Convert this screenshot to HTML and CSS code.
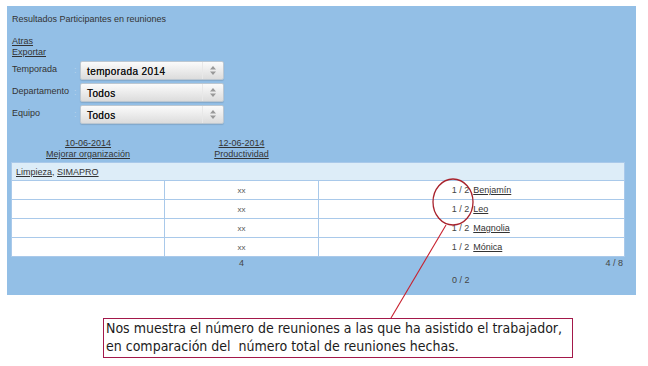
FILE: index.html
```html
<!DOCTYPE html>
<html lang="es">
<head>
    <meta charset="UTF-8">
    <title>Resultados Participantes en reuniones</title>
    <link rel="stylesheet" href="styles.css">
</head>
<body>
    <div class="panel">
        <div class="title">Resultados Participantes en reuniones</div>

        <div class="links">
            <a href="#">Atras</a><br>
            <a href="#">Exportar</a>
        </div>

        <div class="filters">
            <div class="filter">
                <span class="label">Temporada</span><span class="colon">:</span>
                <div class="select">
                    <span class="value">temporada 2014</span>
                    <span class="arrow"><svg width="6" height="9" viewBox="0 0 6 9"><path d="M3 0 L6 3.5 L0 3.5 Z M0 5.5 L6 5.5 L3 9 Z" fill="#999"/></svg></span>
                </div>
            </div>
            <div class="filter">
                <span class="label">Departamento</span><span class="colon">:</span>
                <div class="select">
                    <span class="value">Todos</span>
                    <span class="arrow"><svg width="6" height="9" viewBox="0 0 6 9"><path d="M3 0 L6 3.5 L0 3.5 Z M0 5.5 L6 5.5 L3 9 Z" fill="#999"/></svg></span>
                </div>
            </div>
            <div class="filter">
                <span class="label">Equipo</span><span class="colon">:</span>
                <div class="select">
                    <span class="value">Todos</span>
                    <span class="arrow"><svg width="6" height="9" viewBox="0 0 6 9"><path d="M3 0 L6 3.5 L0 3.5 Z M0 5.5 L6 5.5 L3 9 Z" fill="#999"/></svg></span>
                </div>
            </div>
        </div>

        <table class="dates">
            <tr>
                <td><a href="#">10-06-2014</a><br><a href="#">Mejorar organización</a></td>
                <td><a href="#">12-06-2014</a><br><a href="#">Productividad</a></td>
                <td></td>
                <td></td>
            </tr>
        </table>

        <table class="results">
            <tr class="group">
                <td colspan="4"><a href="#">Limpieza</a>, <a href="#">SIMAPRO</a></td>
            </tr>
            <tr><td></td><td class="mid">xx</td><td class="count">1 / 2</td><td class="name"><a href="#">Benjamín</a></td></tr>
            <tr><td></td><td class="mid">xx</td><td class="count">1 / 2</td><td class="name"><a href="#">Leo</a></td></tr>
            <tr><td></td><td class="mid">xx</td><td class="count">1 / 2</td><td class="name"><a href="#">Magnolia</a></td></tr>
            <tr><td></td><td class="mid">xx</td><td class="count">1 / 2</td><td class="name"><a href="#">Mónica</a></td></tr>
        </table>

        <table class="totals">
            <tr><td></td><td class="mid">4</td><td></td><td class="count">4 / 8</td></tr>
            <tr class="second"><td></td><td></td><td class="count">0 / 2</td><td></td></tr>
        </table>
    </div>

    <div class="note">
        Nos muestra el número de reuniones a las que ha asistido el trabajador,<br>
        en comparación del &nbsp;número total de reuniones hechas.
    </div>

    <svg class="mark" width="648" height="366" viewBox="0 0 648 366">
        <ellipse cx="453" cy="202" rx="20" ry="23" fill="none" stroke="#a8222c" stroke-width="1.3"/>
        <line x1="446" y1="225" x2="391" y2="318" stroke="#c8202e" stroke-width="1.1"/>
    </svg>
</body>
</html>
```

FILE: styles.css
```css
body {
    margin: 0;
    background-color: #fff;
    font-family: "Liberation Sans", Arial, sans-serif;
    font-size: 9px;
    color: #333;
    position: relative;
    width: 648px;
    height: 366px;
    overflow: hidden;
}

a {
    color: #333;
    text-decoration: underline;
}

.panel {
    margin: 6px 0 0 7px;
    width: 614px;
    height: 289px;
    padding: 0 11px 0 4px;
    background-color: #93bfe6;
    overflow: hidden;
}

.title {
    padding: 7px 0 0 1px;
    line-height: 12px;
}

.links {
    margin-top: 11px;
    padding-left: 1px;
    line-height: 11px;
}

.filters {
    margin-top: 3px;
    display: flex;
    flex-direction: column;
    gap: 4px;
}

.filter {
    display: flex;
    align-items: center;
    height: 18px;
}

.filter .label {
    width: 62px;
    padding-left: 1px;
    margin-top: -2px;
}

.filter .colon {
    width: 6px;
    color: #b8d3ec;
}

.select {
    display: flex;
    width: 142px;
    height: 17px;
    border: 1px solid #bcc7d1;
    border-radius: 2px;
    background: linear-gradient(#fbfbfb, #dcdcdc);
    box-shadow: 0 1px 1px rgba(0, 0, 0, 0.12);
}

.select .value {
    flex-grow: 1;
    padding-left: 6px;
    line-height: 19px;
    font-size: 10px;
    letter-spacing: 0.4px;
    color: #111;
    text-shadow: 0 0 0.4px #333;
    border-right: 1px solid #e8e8e8;
}

.select .arrow {
    width: 20px;
    display: flex;
    align-items: center;
    justify-content: center;
}

table {
    border-collapse: collapse;
    table-layout: fixed;
    width: 614px;
}

table td {
    padding: 0;
}

.dates {
    margin-top: 15px;
    line-height: 11px;
}

.dates td {
    text-align: center;
}

.dates td:nth-child(1),
.results td:nth-child(1),
.totals td:nth-child(1) {
    width: 154px;
}

.dates td:nth-child(2),
.results td:nth-child(2),
.totals td:nth-child(2) {
    width: 153px;
}

.results {
    margin-top: 2px;
    border: 1px solid #a9c9ea;
    background-color: #fff;
}

.results tr td {
    height: 18px;
    border-bottom: 1px solid #a9c9ea;
}

.results tr td:nth-child(1),
.results tr td:nth-child(2) {
    border-right: 1px solid #a9c9ea;
}

.results .group td {
    height: 17px;
    padding-left: 4px;
    background-color: #ddedf8;
    border-right: none;
}

.mid {
    text-align: center;
    font-size: 8px;
    color: #555;
}

.count {
    text-align: right;
    padding-right: 2px;
    color: #444;
}

.name {
    padding-left: 2px;
}

.totals td {
    height: 12px;
    line-height: 12px;
}

.totals .mid {
    font-size: 9px;
    color: #444;
}

.totals .second td {
    padding-top: 5px;
}

.note {
    margin: 23px 0 0 103px;
    width: 464px;
    padding: 0 2px 2px 2px;
    border: 1px solid #a3184a;
    font-family: "Liberation Sans Narrow", "DejaVu Sans Condensed", sans-serif;
    font-size: 14px;
    line-height: 18px;
    color: #1c1c1c;
}

.mark {
    position: absolute;
    top: 0;
    left: 0;
    pointer-events: none;
}
```
